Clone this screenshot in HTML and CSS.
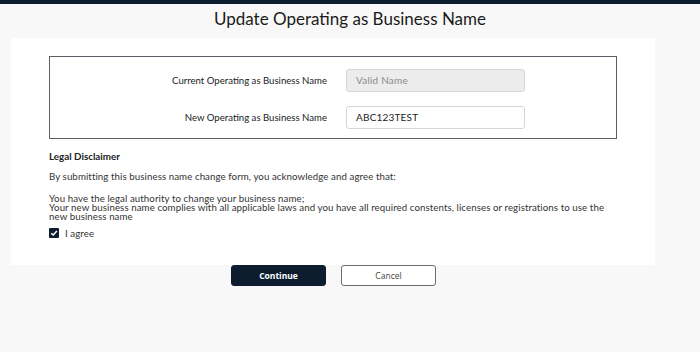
FILE: index.html
```html
<html>
<head>
	<link rel="stylesheet" href="styles.css">
</head>
<body>
	<div class='topbar'></div>
	<h1 class='title'>Update Operating as Business Name</h1>
	<div class='panel'>
		<div class='namebox'>
			<div class='row'>
				<label class='label'>Current Operating as Business Name</label>
				<div class='field disabled'>Valid Name</div>
			</div>
			<div class='row'>
				<label class='label'>New Operating as Business Name</label>
				<div class='field'>ABC123TEST</div>
			</div>
		</div>
		<div class='legal'>
			<div class='legal-head'>Legal Disclaimer</div>
			<p class='intro'>By submitting this business name change form, you acknowledge and agree that:</p>
			<p class='terms'>You have the legal authority to change your business name;<br>Your new business name complies with all applicable laws and you have all required constents, licenses or registrations to use the new business name</p>
			<div class='agree'>
				<span class='check'>
					<svg width='8' height='8' viewBox='0 0 10 10'><path d='M1.5 5.2 L4 7.6 L8.6 2.4' fill='none' stroke='white' stroke-width='1.8'/></svg>
				</span>
				I agree
			</div>
		</div>
	</div>
	<div class='actions'>
		<button class='btn primary'>Continue</button>
		<button class='btn secondary'>Cancel</button>
	</div>
</body>
</html>
```

FILE: styles.css
```css
body {
	margin: 0;
	background-color: #f8f8f8;
	font-family: Lato, 'Noto Sans', sans-serif;
	color: #222;
}

.topbar {
	height: 4px;
	background-color: #0d1d2f;
}

.title {
	margin: 0;
	height: 34px;
	line-height: 30px;
	text-align: center;
	font-size: 17px;
	font-weight: normal;
	color: #1b1b1b;
}

.panel {
	margin-left: 11px;
	width: 644px;
	height: 227px;
	background-color: #fff;
	padding-top: 18px;
	box-sizing: border-box;
}

.namebox {
	margin-left: 38px;
	width: 568px;
	height: 83px;
	border: 1px solid #5a6168;
	box-sizing: border-box;
	padding-top: 12px;
	display: flex;
	flex-direction: column;
	gap: 14px;
}

.row {
	display: flex;
	align-items: center;
}

.label {
	width: 277px;
	text-align: right;
	font-size: 9.6px;
	color: #222;
}

.field {
	margin-left: 19px;
	width: 179px;
	height: 23px;
	box-sizing: border-box;
	border: 1px solid #d6d6d6;
	border-radius: 3px;
	padding-left: 9px;
	font-size: 10px;
	line-height: 21px;
	letter-spacing: 0.2px;
	color: #222;
}

.field.disabled {
	background-color: #ececec;
	color: #8a8a8a;
}

.legal {
	margin-left: 38px;
	font-size: 9.7px;
	letter-spacing: 0.08px;
	color: #333;
}

.legal-head {
	margin-top: 11px;
	font-size: 9.8px;
	font-weight: bold;
	letter-spacing: 0;
	color: #222;
}

.intro {
	margin: 8px 0 0 0;
}

.terms {
	margin: 12px 0 0 0;
	line-height: 9px;
	width: 566px;
}

.agree {
	margin-top: 6px;
	display: flex;
	align-items: center;
	gap: 6px;
}

.check {
	width: 10px;
	height: 10px;
	background-color: #0d1d2f;
	border-radius: 1px;
	display: flex;
	align-items: center;
	justify-content: center;
}

.actions {
	margin-left: 231px;
	display: flex;
	gap: 15px;
}

.btn {
	width: 95px;
	height: 21px;
	border-radius: 3px;
	font-family: 'Open Sans', sans-serif;
	font-size: 8.5px;
	padding: 0;
}

.primary {
	background-color: #0d1d2f;
	border: 1px solid #0d1d2f;
	color: #fff;
	font-weight: bold;
}

.secondary {
	background-color: #fff;
	border: 1px solid #6a6e72;
	color: #444;
}
```
